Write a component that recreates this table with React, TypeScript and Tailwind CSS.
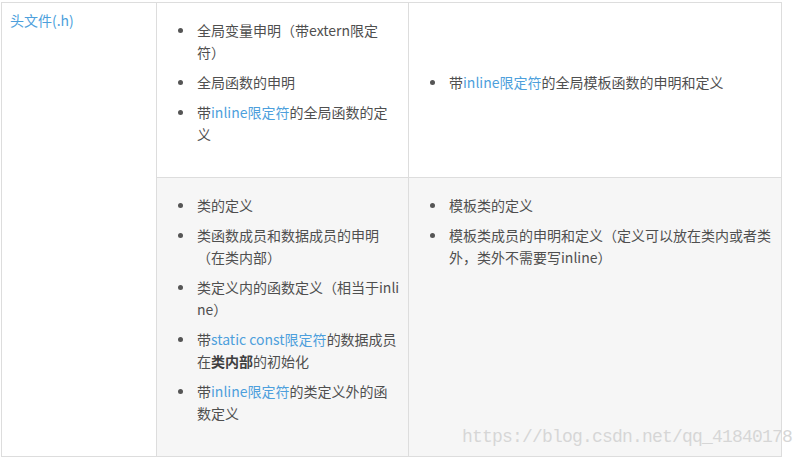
import React from "react";

const L = ({ children }: { children: React.ReactNode }) => (
  <span className="text-[#4d9fdc]">{children}</span>
);

const Item = ({ children }: { children: React.ReactNode }) => (
  <li className="flex">
    <span className="mt-[9px] mr-[14px] h-[5px] w-[5px] shrink-0 rounded-full bg-[#555]" />
    <span className="min-w-0 flex-1 break-all">{children}</span>
  </li>
);

const List = ({ children }: { children: React.ReactNode }) => (
  <ul className="flex flex-col gap-2 pl-[13px]">{children}</ul>
);

export default function App() {
  return (
    <div
      className="relative h-[457px] w-[802px] overflow-hidden bg-white text-[14px] leading-[22px] text-[#4f4f4f] [text-spacing-trim:space-all]"
      style={{ fontFamily: '"Noto Sans CJK SC", "Noto Sans", sans-serif' }}
    >
      <table className="ml-[1px] mt-[2px] w-[780px] table-fixed border-collapse">
        <colgroup>
          <col className="w-[155px]" />
          <col className="w-[252px]" />
          <col className="w-[373px]" />
        </colgroup>
        <tbody>
          <tr>
            <td
              rowSpan={2}
              className="border border-[#ddd] bg-white px-2 pt-[6px] align-top"
            >
              <span className="text-[#4d9fdc]">头文件(.h)</span>
            </td>
            <td className="border border-[#ddd] bg-white pl-2 pr-2 pt-[16px] pb-[32px] align-top">
              <List>
                <Item>全局变量申明（带extern限定符）</Item>
                <Item>全局函数的申明</Item>
                <Item>
                  带<L>inline限定符</L>的全局函数的定义
                </Item>
              </List>
            </td>
            <td className="border border-[#ddd] bg-white pl-2 pr-2 pt-[16px] pb-[32px] align-middle">
              <List>
                <Item>
                  带<L>inline限定符</L>的全局模板函数的申明和定义
                </Item>
              </List>
            </td>
          </tr>
          <tr>
            <td className="border border-[#ddd] bg-[#f6f6f6] pl-2 pr-2 pt-[16px] pb-[32px] align-top">
              <List>
                <Item>类的定义</Item>
                <Item>类函数成员和数据成员的申明（在类内部）</Item>
                <Item>类定义内的函数定义（相当于inline）</Item>
                <Item>
                  带<L>static const限定符</L>的数据成员在
                  <b className="font-bold text-[#3f3f3f]">类内部</b>的初始化
                </Item>
                <Item>
                  带<L>inline限定符</L>的类定义外的函数定义
                </Item>
              </List>
            </td>
            <td className="border border-[#ddd] bg-[#f6f6f6] pl-2 pr-2 pt-[16px] pb-[32px] align-top">
              <List>
                <Item>模板类的定义</Item>
                <Item>模板类成员的申明和定义（定义可以放在类内或者类外，类外不需要写inline）</Item>
              </List>
            </td>
          </tr>
        </tbody>
      </table>
      <div
        className="pointer-events-none absolute left-[462px] top-[426px] whitespace-nowrap text-[18px] leading-[22px] tracking-[-0.8px] text-[#d6d6d6]"
        style={{ fontFamily: '"Liberation Mono", monospace' }}
      >
        https://blog.csdn.net/qq_41840178
      </div>
    </div>
  );
}
